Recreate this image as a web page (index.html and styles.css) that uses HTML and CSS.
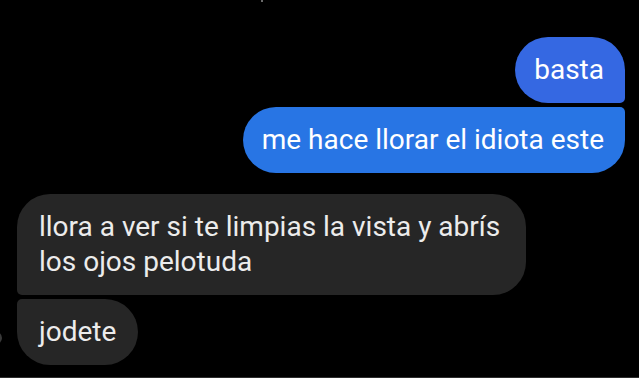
FILE: index.html
```html
<!DOCTYPE html>
<html lang="es">
<head>
    <meta charset="UTF-8">
    <meta name="viewport" content="width=device-width, initial-scale=1.0">
    <title>Chat</title>
    <link rel="stylesheet" href="styles.css">
</head>
<body>
    <div class="chat">
        <!-- mensajes enviados -->
        <div class="group sent">
            <div class="bubble first top">basta</div>
            <div class="bubble last bottom">me hace llorar el idiota este</div>
        </div>

        <!-- mensajes recibidos -->
        <div class="group received">
            <div class="bubble first">llora a ver si te limpias la vista y abrís los ojos pelotuda</div>
            <div class="bubble last">jodete</div>
        </div>

        <div class="avatar"></div>
        <div class="cut-mark"></div>
    </div>
    <div class="footer-line"></div>
</body>
</html>
```

FILE: styles.css
```css
*{
    margin: 0;
    padding: 0;
    box-sizing: border-box;
}

html, body{
    height: 100%;
    background-color: #000;
    overflow: hidden;
}

body{
    font-family: Roboto, "Liberation Sans", Arial, sans-serif;
    display: flex;
    flex-direction: column;
}

.chat{
    position: relative;
    flex: 1;
    display: flex;
    flex-direction: column;
    gap: 21px;
    padding: 37px 14px 0 17px;
}

.group{
    display: flex;
    flex-direction: column;
    gap: 4px;
}

.group.sent{
    align-items: flex-end;
}

.group.received{
    align-items: flex-start;
}

.bubble{
    max-width: 509px;
    padding: 15px 22px 16px;
    font-size: 28px;
    line-height: 35px;
    border-radius: 33px;
}

.sent .bubble{
    color: #fff;
    background-color: #2a72e4;
    padding: 15px 21px 16px 19px;
}

.sent .bubble.top{
    background-color: #3568e2;
}

.sent .bubble.bottom{
    background-color: #2875e4;
}

.sent .first{
    border-bottom-right-radius: 5px;
}

.sent .last{
    border-top-right-radius: 5px;
}

.received .bubble{
    color: #ececec;
    background-color: #262626;
}

.received .first{
    border-bottom-left-radius: 5px;
}

.received .last{
    border-top-left-radius: 5px;
}

/* borde del avatar que queda fuera de pantalla */
.avatar{
    position: absolute;
    left: -14px;
    top: 331px;
    width: 16px;
    height: 14px;
    border-radius: 50%;
    background-color: #3a3a3a;
}

/* resto de un texto cortado arriba */
.cut-mark{
    position: absolute;
    left: 261px;
    top: 0;
    width: 2px;
    height: 2px;
    background-color: #6a6a6a;
}

.footer-line{
    height: 1px;
    background-color: #2e2e2e;
}
```
